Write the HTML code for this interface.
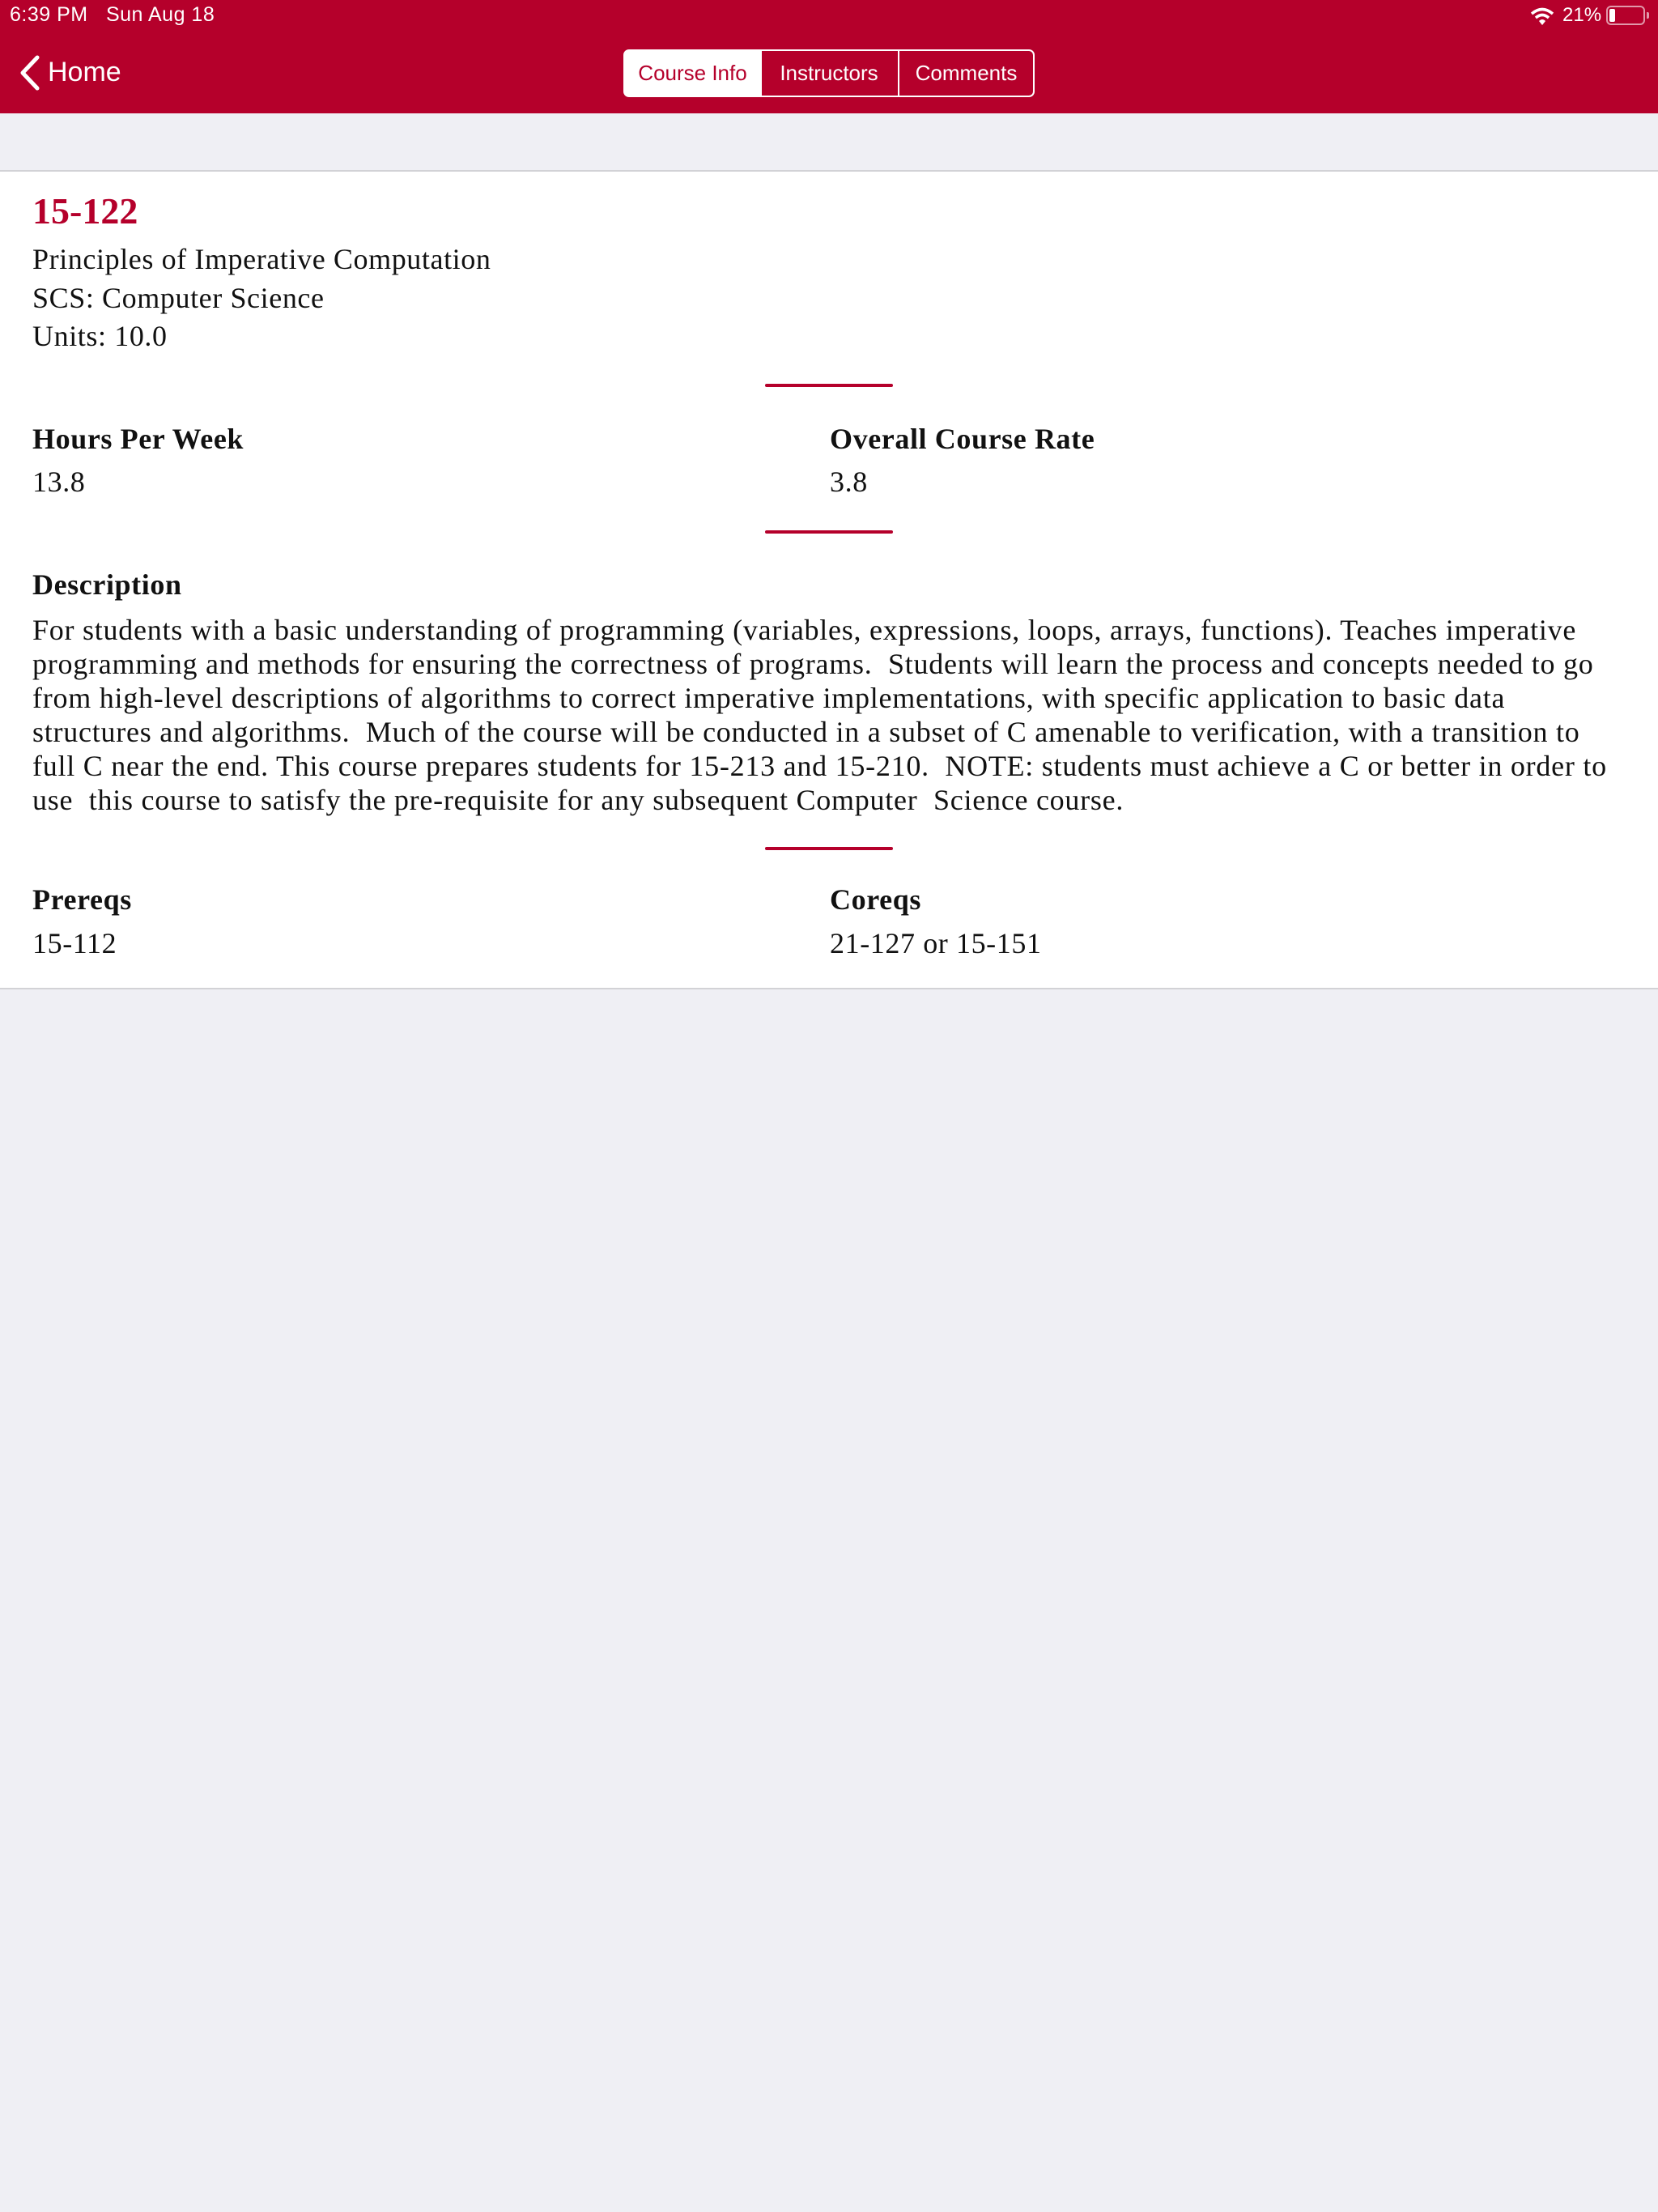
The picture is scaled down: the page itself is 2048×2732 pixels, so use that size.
<!DOCTYPE html>
<html><head><meta charset="utf-8"><style>
*{margin:0;padding:0;box-sizing:border-box}
body{width:2048px;height:2732px;background:#efeff4;position:relative;font-family:"Liberation Serif",serif;color:#111;overflow:hidden}
.a{position:absolute;white-space:nowrap}
.top{position:absolute;left:0;top:0;width:2048px;height:140px;background:#b5002b}
.sans{font-family:"Liberation Sans",sans-serif;color:#fff}
.white{position:absolute;left:0;top:210px;width:2048px;height:1012px;background:#fff;border-top:2px solid #d2d2d6;border-bottom:2px solid #d2d2d6}
.div{position:absolute;left:945px;width:158px;height:4px;background:#b5002b;border-radius:2px}
.seg{position:absolute;top:61px;height:59px;border:2px solid #fff;font-family:"Liberation Sans",sans-serif;font-size:26px;color:#fff;display:flex;align-items:center;justify-content:center}
.h{font-weight:bold;font-size:36px;line-height:1;letter-spacing:0.6px}
.t{font-size:36px;line-height:1;letter-spacing:0.6px}
</style></head><body>
<div class="top"></div>
<div class="a sans" style="left:12px;top:4px;font-size:25px;letter-spacing:0.5px">6:39 PM&nbsp;&nbsp;&nbsp;Sun Aug 18</div>
<svg class="a" style="left:1890px;top:8px" width="30" height="24" viewBox="0 0 30 24"><path d="M2 9 Q15 -2 28 9" stroke="#fff" stroke-width="3.5" fill="none"/><path d="M7 14 Q15 7 23 14" stroke="#fff" stroke-width="3.5" fill="none"/><path d="M11 18 L15 23 L19 18 Q15 14 11 18Z" fill="#fff"/></svg>
<div class="a sans" style="left:1930px;top:5px;font-size:24px">21%</div>
<div class="a" style="left:1984px;top:7px;width:48px;height:24px;border:2px solid rgba(255,255,255,.6);border-radius:6px"><div style="position:absolute;left:2px;top:2px;width:7px;height:16px;background:#fff;border-radius:2px"></div></div>
<div class="a" style="left:2034px;top:15px;width:3px;height:8px;background:rgba(255,255,255,.6);border-radius:0 2px 2px 0"></div>
<svg class="a" style="left:22px;top:68px" width="30" height="44" viewBox="0 0 30 44"><path d="M24 3 L6 22 L24 41" stroke="#fff" stroke-width="5" fill="none" stroke-linecap="round" stroke-linejoin="round"/></svg>
<div class="a sans" style="left:59px;top:70px;font-size:34px">Home</div>
<div class="seg" style="left:770px;width:171px;background:#fff;color:#b5002b;border-radius:7px 0 0 7px">Course Info</div>
<div class="seg" style="left:939px;width:172px;border-left:none">Instructors</div>
<div class="seg" style="left:1109px;width:169px;border-left:2px solid #fff;border-radius:0 7px 7px 0">Comments</div>
<div class="white"></div>
<div class="a" style="left:40px;top:234px;font-size:46px;font-weight:bold;color:#b5002b">15-122</div>
<div class="a t" style="left:40px;top:302px">Principles of Imperative Computation</div>
<div class="a t" style="left:40px;top:350px">SCS: Computer Science</div>
<div class="a t" style="left:40px;top:397px">Units: 10.0</div>
<div class="div" style="top:474px"></div>
<div class="a h" style="left:40px;top:524px">Hours Per Week</div>
<div class="a t" style="left:40px;top:577px">13.8</div>
<div class="a h" style="left:1025px;top:524px">Overall Course Rate</div>
<div class="a t" style="left:1025px;top:577px">3.8</div>
<div class="div" style="top:655px"></div>
<div class="a h" style="left:40px;top:704px">Description</div>
<div class="a t" style="left:40px;top:757px;line-height:42px;font-size:36px;letter-spacing:0.75px">For students with a basic understanding of programming (variables, expressions, loops, arrays, functions). Teaches imperative<br>programming and methods for ensuring the correctness of programs.&nbsp; Students will learn the process and concepts needed to go<br>from high-level descriptions of algorithms to correct imperative implementations, with specific application to basic data<br>structures and algorithms.&nbsp; Much of the course will be conducted in a subset of C amenable to verification, with a transition to<br>full C near the end. This course prepares students for 15-213 and 15-210.&nbsp; NOTE: students must achieve a C or better in order to<br>use&nbsp; this course to satisfy the pre-requisite for any subsequent Computer&nbsp; Science course.</div>
<div class="div" style="top:1046px"></div>
<div class="a h" style="left:40px;top:1093px">Prereqs</div>
<div class="a t" style="left:40px;top:1147px">15-112</div>
<div class="a h" style="left:1025px;top:1093px">Coreqs</div>
<div class="a t" style="left:1025px;top:1147px">21-127 or 15-151</div>
</body></html>
